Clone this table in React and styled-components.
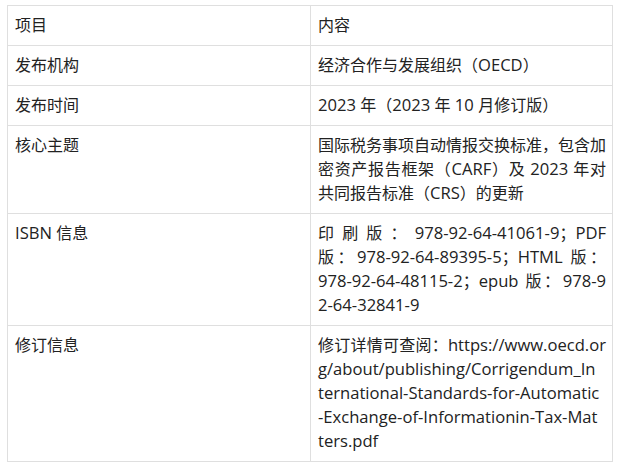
import styled, { createGlobalStyle } from "styled-components";

const GlobalStyle = createGlobalStyle`
  body {
    margin: 0;
    background: #ffffff;
    font-family: "Open Sans", "Noto Sans CJK SC", sans-serif;
    color: #222222;
  }
`;

const Page = styled.div`
  padding: 5px 0 0 7px;
`;

const Table = styled.table`
  width: 606px;
  border-collapse: collapse;
  table-layout: fixed;
  font-size: 16px;
  line-height: 24px;
`;

const Cell = styled.td`
  border: 1px solid #dfdfdf;
  padding: 7px 6px 8px 7px;
  vertical-align: top;
  text-align: justify;
`;

// one printed line of a wrapped value; all but the last are justified
const Line = styled.span`
  display: block;
  white-space: nowrap;
  text-align-last: ${(props) => (props.$last ? "auto" : "justify")};
`;

// latin runs are a little wider in the original font
const Latin = styled.span`
  font-size: 16.6px;
  line-height: 24px;
`;

const rows = [
  ["项目", ["内容"]],
  ["发布机构", ["经济合作与发展组织（OECD）"]],
  ["发布时间", ["2023 年（2023 年 10 月修订版）"]],
  [
    "核心主题",
    [
      "国际税务事项自动情报交换标准，包含加",
      "密资产报告框架（CARF）及 2023 年对",
      "共同报告标准（CRS）的更新",
    ],
  ],
  [
    "ISBN 信息",
    [
      "印刷版：978-92-64-41061-9；PDF",
      "版：978-92-64-89395-5；HTML 版：",
      "978-92-64-48115-2；epub 版：978-9",
      "2-64-32841-9",
    ],
  ],
  [
    "修订信息",
    [
      "修订详情可查阅：https://www.oecd.or",
      "g/about/publishing/Corrigendum_In",
      "ternational-Standards-for-Automatic",
      "-Exchange-of-Informationin-Tax-Mat",
      "ters.pdf",
    ],
  ],
];

function Text({ children }) {
  return children
    .split(/([\x20-\x7e]+)/)
    .filter(Boolean)
    .map((part, i) =>
      /^[\x20-\x7e]+$/.test(part) ? <Latin key={i}>{part}</Latin> : part
    );
}

export default function App() {
  return (
    <Page>
      <GlobalStyle />
      <Table>
        <colgroup>
          <col style={{ width: 303 }} />
          <col />
        </colgroup>
        <tbody>
          {rows.map(([label, lines]) => (
            <tr key={label}>
              <Cell>
                <Text>{label}</Text>
              </Cell>
              <Cell>
                {lines.map((line, i) => (
                  <Line key={i} $last={i === lines.length - 1}>
                    <Text>{line}</Text>
                  </Line>
                ))}
              </Cell>
            </tr>
          ))}
        </tbody>
      </Table>
    </Page>
  );
}
